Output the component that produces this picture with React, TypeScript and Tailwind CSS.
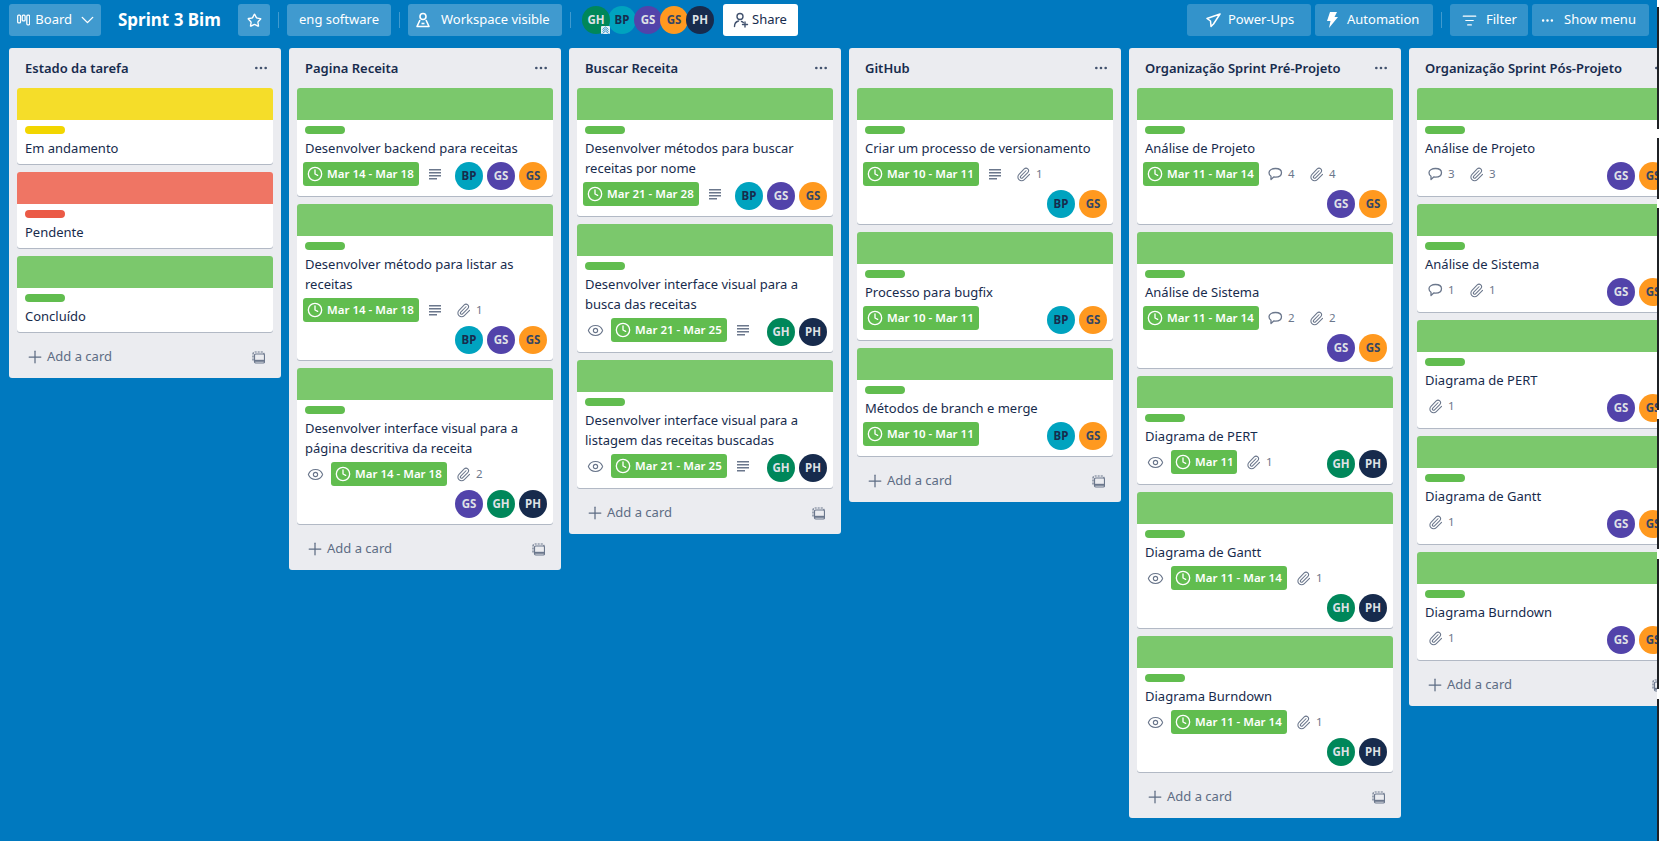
// App.tsx
import { ChevronDown, Star, Clock, Eye, Paperclip, Plus, Ellipsis, ListFilter } from 'lucide-react'

type Member = 'GH' | 'BP' | 'GS' | 'GO' | 'PH'

type Card = {
  cover: 'green' | 'yellow' | 'red'
  title: string
  watch?: boolean
  date?: string
  desc?: boolean
  comments?: number
  clips?: number
  members?: Member[]
}

type List = { title: string; cards: Card[] }

const COVER = { green: 'bg-[#7bc86c]', yellow: 'bg-[#f5dd29]', red: 'bg-[#ef7564]' }
const LABEL = { green: 'bg-[#61bd4f]', yellow: 'bg-[#f2d600]', red: 'bg-[#eb5a46]' }

const MEMBER: Record<Member, { text: string; cls: string }> = {
  GH: { text: 'GH', cls: 'bg-[#00875a] text-[#dfe1e6]' },
  BP: { text: 'BP', cls: 'bg-[#00a3bf] text-[#172b4d]' },
  GS: { text: 'GS', cls: 'bg-[#5243aa] text-[#dfe1e6]' },
  GO: { text: 'GS', cls: 'bg-[#ff991f] text-[#344563]' },
  PH: { text: 'PH', cls: 'bg-[#172b4d] text-[#dfe1e6]' },
}

const LISTS: List[] = [
  {
    title: 'Estado da tarefa',
    cards: [
      { cover: 'yellow', title: 'Em andamento' },
      { cover: 'red', title: 'Pendente' },
      { cover: 'green', title: 'Concluído' },
    ],
  },
  {
    title: 'Pagina Receita',
    cards: [
      { cover: 'green', title: 'Desenvolver backend para receitas', date: 'Mar 14 - Mar 18', desc: true, members: ['BP', 'GS', 'GO'] },
      { cover: 'green', title: 'Desenvolver método para listar as receitas', date: 'Mar 14 - Mar 18', desc: true, clips: 1, members: ['BP', 'GS', 'GO'] },
      { cover: 'green', title: 'Desenvolver interface visual para a página descritiva da receita', watch: true, date: 'Mar 14 - Mar 18', clips: 2, members: ['GS', 'GH', 'PH'] },
    ],
  },
  {
    title: 'Buscar Receita',
    cards: [
      { cover: 'green', title: 'Desenvolver métodos para buscar receitas por nome', date: 'Mar 21 - Mar 28', desc: true, members: ['BP', 'GS', 'GO'] },
      { cover: 'green', title: 'Desenvolver interface visual para a busca das receitas', watch: true, date: 'Mar 21 - Mar 25', desc: true, members: ['GH', 'PH'] },
      { cover: 'green', title: 'Desenvolver interface visual para a listagem das receitas buscadas', watch: true, date: 'Mar 21 - Mar 25', desc: true, members: ['GH', 'PH'] },
    ],
  },
  {
    title: 'GitHub',
    cards: [
      { cover: 'green', title: 'Criar um processo de versionamento', date: 'Mar 10 - Mar 11', desc: true, clips: 1, members: ['BP', 'GO'] },
      { cover: 'green', title: 'Processo para bugfix', date: 'Mar 10 - Mar 11', members: ['BP', 'GO'] },
      { cover: 'green', title: 'Métodos de branch e merge', date: 'Mar 10 - Mar 11', members: ['BP', 'GO'] },
    ],
  },
  {
    title: 'Organização Sprint Pré-Projeto',
    cards: [
      { cover: 'green', title: 'Análise de Projeto', date: 'Mar 11 - Mar 14', comments: 4, clips: 4, members: ['GS', 'GO'] },
      { cover: 'green', title: 'Análise de Sistema', date: 'Mar 11 - Mar 14', comments: 2, clips: 2, members: ['GS', 'GO'] },
      { cover: 'green', title: 'Diagrama de PERT', watch: true, date: 'Mar 11', clips: 1, members: ['GH', 'PH'] },
      { cover: 'green', title: 'Diagrama de Gantt', watch: true, date: 'Mar 11 - Mar 14', clips: 1, members: ['GH', 'PH'] },
      { cover: 'green', title: 'Diagrama Burndown', watch: true, date: 'Mar 11 - Mar 14', clips: 1, members: ['GH', 'PH'] },
    ],
  },
  {
    title: 'Organização Sprint Pós-Projeto',
    cards: [
      { cover: 'green', title: 'Análise de Projeto', comments: 3, clips: 3, members: ['GS', 'GO'] },
      { cover: 'green', title: 'Análise de Sistema', comments: 1, clips: 1, members: ['GS', 'GO'] },
      { cover: 'green', title: 'Diagrama de PERT', clips: 1, members: ['GS', 'GO'] },
      { cover: 'green', title: 'Diagrama de Gantt', clips: 1, members: ['GS', 'GO'] },
      { cover: 'green', title: 'Diagrama Burndown', clips: 1, members: ['GS', 'GO'] },
    ],
  },
]

function BoardIcon() {
  return (
    <svg width="14" height="14" viewBox="0 0 14 14" fill="none" stroke="currentColor" strokeWidth="1.3">
      <rect x="0.7" y="2" width="3" height="8" rx="1" />
      <rect x="5.5" y="2" width="3" height="6" rx="1" />
      <rect x="10.3" y="2" width="3" height="10" rx="1" />
    </svg>
  )
}

function WorkspaceIcon() {
  return (
    <svg width="14" height="16" viewBox="0 0 14 16" fill="none" stroke="currentColor" strokeWidth="1.6">
      <circle cx="7" cy="4.5" r="3" />
      <path d="M4 8 1 14.5h12L10 8" strokeLinejoin="round" />
      <path d="M5.5 11.5h3" />
    </svg>
  )
}

function RocketIcon() {
  return (
    <svg width="15" height="15" viewBox="0 0 15 15" fill="none" stroke="currentColor" strokeWidth="1.5" strokeLinejoin="round">
      <path d="M14 1 1 5.5l3.5 2.5.5 5.5 2.5-2.5L14 1Z" />
    </svg>
  )
}

function BoltIcon() {
  return (
    <svg width="12" height="16" viewBox="0 0 12 16" fill="currentColor">
      <path d="M4 0h7L8.5 5H12L3 16l1.5-7H1L4 0Z" />
    </svg>
  )
}

function ShareIcon() {
  return (
    <svg width="16" height="16" viewBox="0 0 16 16" fill="none" stroke="#42526e" strokeWidth="1.4" strokeLinecap="round">
      <circle cx="7" cy="4.5" r="3" />
      <path d="M1.5 14.5c0-3 2-5 4-5.5M8.5 9.5c.7.2 1.3.5 1.8 1M12 10v5M9.5 12.5h5" />
    </svg>
  )
}

function DescIcon() {
  return (
    <svg width="12" height="12" viewBox="0 0 12 12" fill="#6b778c">
      <rect x="0" y="1" width="12" height="1.5" />
      <rect x="0" y="4" width="12" height="1.5" />
      <rect x="0" y="7" width="12" height="1.5" />
      <rect x="0" y="10" width="8" height="1.5" />
    </svg>
  )
}

function CommentIcon() {
  return (
    <svg width="15" height="14" viewBox="0 0 15 14" fill="none" stroke="#6b778c" strokeWidth="1.3" strokeLinejoin="round" className="shrink-0">
      <path d="M7.5 1.5c3.6 0 6 1.8 6 4.3s-2.4 4.3-6 4.3c-.6 0-1.2 0-1.8-.1L3 12.5V9.2C1.6 8.4 1 7.2 1 5.8 1 3.3 3.9 1.5 7.5 1.5Z" />
    </svg>
  )
}

function TemplateIcon() {
  return (
    <svg width="13" height="13" viewBox="0 0 13 13" fill="none" stroke="#6b778c" strokeWidth="1.2">
      <path d="M1 9.5V3a2 2 0 0 1 2-2h7a2 2 0 0 1 2 2" strokeDasharray="2 1" />
      <rect x="2.5" y="3" width="10" height="9" rx="1.2" />
      <path d="M2.5 9.8h10" strokeWidth="2" />
    </svg>
  )
}

function OwnerBadge() {
  return (
    <svg width="9" height="8" viewBox="0 0 9 8" className="absolute right-0 bottom-0">
      <rect width="9" height="8" rx="1" fill="#e4f0f6" />
      <path d="M1.5 3.5 4.5 1l3 2.5M1.5 5.5l3-2.5 3 2.5M1.5 7.5l3-2.5 3 2.5" fill="none" stroke="#0079bf" strokeWidth="0.8" />
    </svg>
  )
}

function Avatar({ who }: { who: Member }) {
  const m = MEMBER[who]
  return (
    <div className={`w-7 h-7 rounded-full flex items-center justify-center text-[11.5px] font-bold ${m.cls}`}>{m.text}</div>
  )
}

function CountBadge({ icon, n }: { icon: React.ReactNode; n: number }) {
  return (
    <div className="w-[37px] h-6 mr-1 mb-1 pl-[5px] flex items-center text-[11.5px] text-[#6b778c]">
      {icon}
      <span className="ml-[5px]">{n}</span>
    </div>
  )
}

function CardView({ card }: { card: Card }) {
  const hasBadges = card.date || card.members || card.clips
  return (
    <div className="bg-white rounded-[3px] mb-2 shadow-[0_1px_0_#091e4240] overflow-hidden">
      <div className={`h-8 ${COVER[card.cover]}`} />
      <div className="pt-[6px] px-2 pb-[2px]">
        <div className={`w-10 h-2 rounded-[4px] mb-1 ${LABEL[card.cover]}`} />
        <div className="text-[13px] leading-5 text-[#172b4d] mb-1">{card.title}</div>
        {hasBadges && (
          <div className="flex flex-wrap -mx-[2px]">
            {card.watch && (
              <div className="w-6 h-6 mr-1 mb-1 flex items-center justify-center text-[#6b778c]">
                <Eye size={17} strokeWidth={1.6} />
              </div>
            )}
            {card.date && (
              <div className={`h-6 mr-1 mb-1 rounded-[3px] bg-[#61bd4f] text-white text-[11.5px] font-semibold flex items-center pl-1 ${card.date.length > 6 ? 'w-[116px]' : 'w-[66px]'}`}>
                <Clock size={16} strokeWidth={2} className="mr-1 shrink-0" />
                <span className="whitespace-nowrap">{card.date}</span>
              </div>
            )}
            {card.desc && (
              <div className="w-6 h-6 mr-1 mb-1 flex items-center justify-center">
                <DescIcon />
              </div>
            )}
            {card.comments && <CountBadge n={card.comments} icon={<CommentIcon />} />}
            {card.clips && <CountBadge n={card.clips} icon={<Paperclip size={15} strokeWidth={1.7} className="shrink-0" />} />}
            {card.members && (
              <div className="ml-auto pl-1 mb-1 flex gap-1">
                {card.members.map((m, i) => <Avatar key={i} who={m} />)}
              </div>
            )}
          </div>
        )}
      </div>
    </div>
  )
}

function ListView({ list }: { list: List }) {
  return (
    <div className="w-[272px] shrink-0 bg-[#ebecf0] rounded-[3px] px-2">
      <div className="h-10 pl-2 pr-1 flex items-center justify-between">
        <span className="pt-[2px] text-[13px] font-semibold text-[#172b4d]">{list.title}</span>
        <Ellipsis size={16} className="text-[#42526e]" />
      </div>
      {list.cards.map((c, i) => <CardView key={i} card={c} />)}
      <div className="h-[38px] pl-2 pr-2 pb-1 flex items-center justify-between text-[#5e6c84] text-[13px]">
        <span className="flex items-center gap-[2px]"><Plus size={20} strokeWidth={1.5} />Add a card</span>
        <TemplateIcon />
      </div>
    </div>
  )
}

function HeaderBtn({ children, className }: { children: React.ReactNode; className: string }) {
  return <div className={`h-8 rounded-[3px] text-white text-[13px] flex items-center ${className}`}>{children}</div>
}

const Divider = () => <div className="w-px h-4 bg-white/25 mx-2" />

export default function App() {
  return (
    <div className="w-[1664px] h-[856px] bg-white overflow-hidden flex font-['Noto_Sans',sans-serif]">
      <div className="w-[1657px] h-[841px] bg-[#0079bf] overflow-hidden shrink-0">
        <div className="h-12 pt-1 pl-[9px] pr-2 flex items-start">
          <HeaderBtn className="w-[92px] bg-white/25 pl-2 gap-[5px]">
            <BoardIcon />
            Board
            <ChevronDown size={22} strokeWidth={1.6} className="ml-auto mr-[3px]" />
          </HeaderBtn>
          <div className="ml-[17px] mr-4 h-8 flex items-center w-[104px] text-[17px] font-bold text-white whitespace-nowrap">Sprint 3 Bim</div>
          <HeaderBtn className="w-8 bg-white/25 justify-center"><Star size={15} strokeWidth={2.2} /></HeaderBtn>
          <div className="h-8 flex items-center"><Divider /></div>
          <HeaderBtn className="w-[104px] bg-white/25 justify-center">eng software</HeaderBtn>
          <div className="h-8 flex items-center"><Divider /></div>
          <HeaderBtn className="w-[154px] bg-white/25 pl-2 gap-[11px]"><WorkspaceIcon />Workspace visible</HeaderBtn>
          <div className="h-8 flex items-center"><Divider /></div>
          <div className="ml-[3px] mt-[2px] flex">
            <div className="relative">
              <Avatar who="GH" />
              <OwnerBadge />
            </div>
            <div className="-ml-[2px]"><Avatar who="BP" /></div>
            <div className="-ml-[2px]"><Avatar who="GS" /></div>
            <div className="-ml-[2px]"><Avatar who="GO" /></div>
            <div className="-ml-[2px]"><Avatar who="PH" /></div>
          </div>
          <div className="ml-[9px] w-[75px] h-8 bg-white rounded-[3px] text-[#172b4d] text-[13px] flex items-center pl-[10px] gap-[3px]"><ShareIcon />Share</div>
          <div className="ml-auto flex">
            <HeaderBtn className="w-[124px] bg-white/20 pl-[19px] gap-[7px]"><RocketIcon />Power-Ups</HeaderBtn>
            <HeaderBtn className="w-[118px] ml-1 bg-white/20 pl-[11px] gap-[9px]"><BoltIcon />Automation</HeaderBtn>
            <div className="h-8 flex items-center"><Divider /></div>
            <HeaderBtn className="w-[78px] bg-white/20 pl-3 gap-[9px]"><ListFilter size={15} strokeWidth={1.8} />Filter</HeaderBtn>
            <HeaderBtn className="w-[117px] ml-1 bg-white/20 pl-2 gap-[9px]"><Ellipsis size={15} />Show menu</HeaderBtn>
          </div>
        </div>
        <div className="flex items-start gap-2 pl-[9px]">
          {LISTS.map((l, i) => <ListView key={i} list={l} />)}
        </div>
      </div>
      {/* capture artefact: broken dark line down the right edge */}
      <div className="w-[2px] pt-[7px] flex flex-col shrink-0">
        <div className="h-[122px] bg-[#1f2125]" />
        <div className="h-[61px] mt-[9px] bg-[#1f2125]" />
        <div className="h-[202px] mt-[9px] bg-[#1f2125]" />
        <div className="h-[130px] mt-[9px] bg-[#1f2125]" />
        <div className="h-[130px] mt-[10px] bg-[#1f2125]" />
        <div className="h-[142px] mt-[10px] bg-[#1f2125]" />
      </div>
    </div>
  )
}
